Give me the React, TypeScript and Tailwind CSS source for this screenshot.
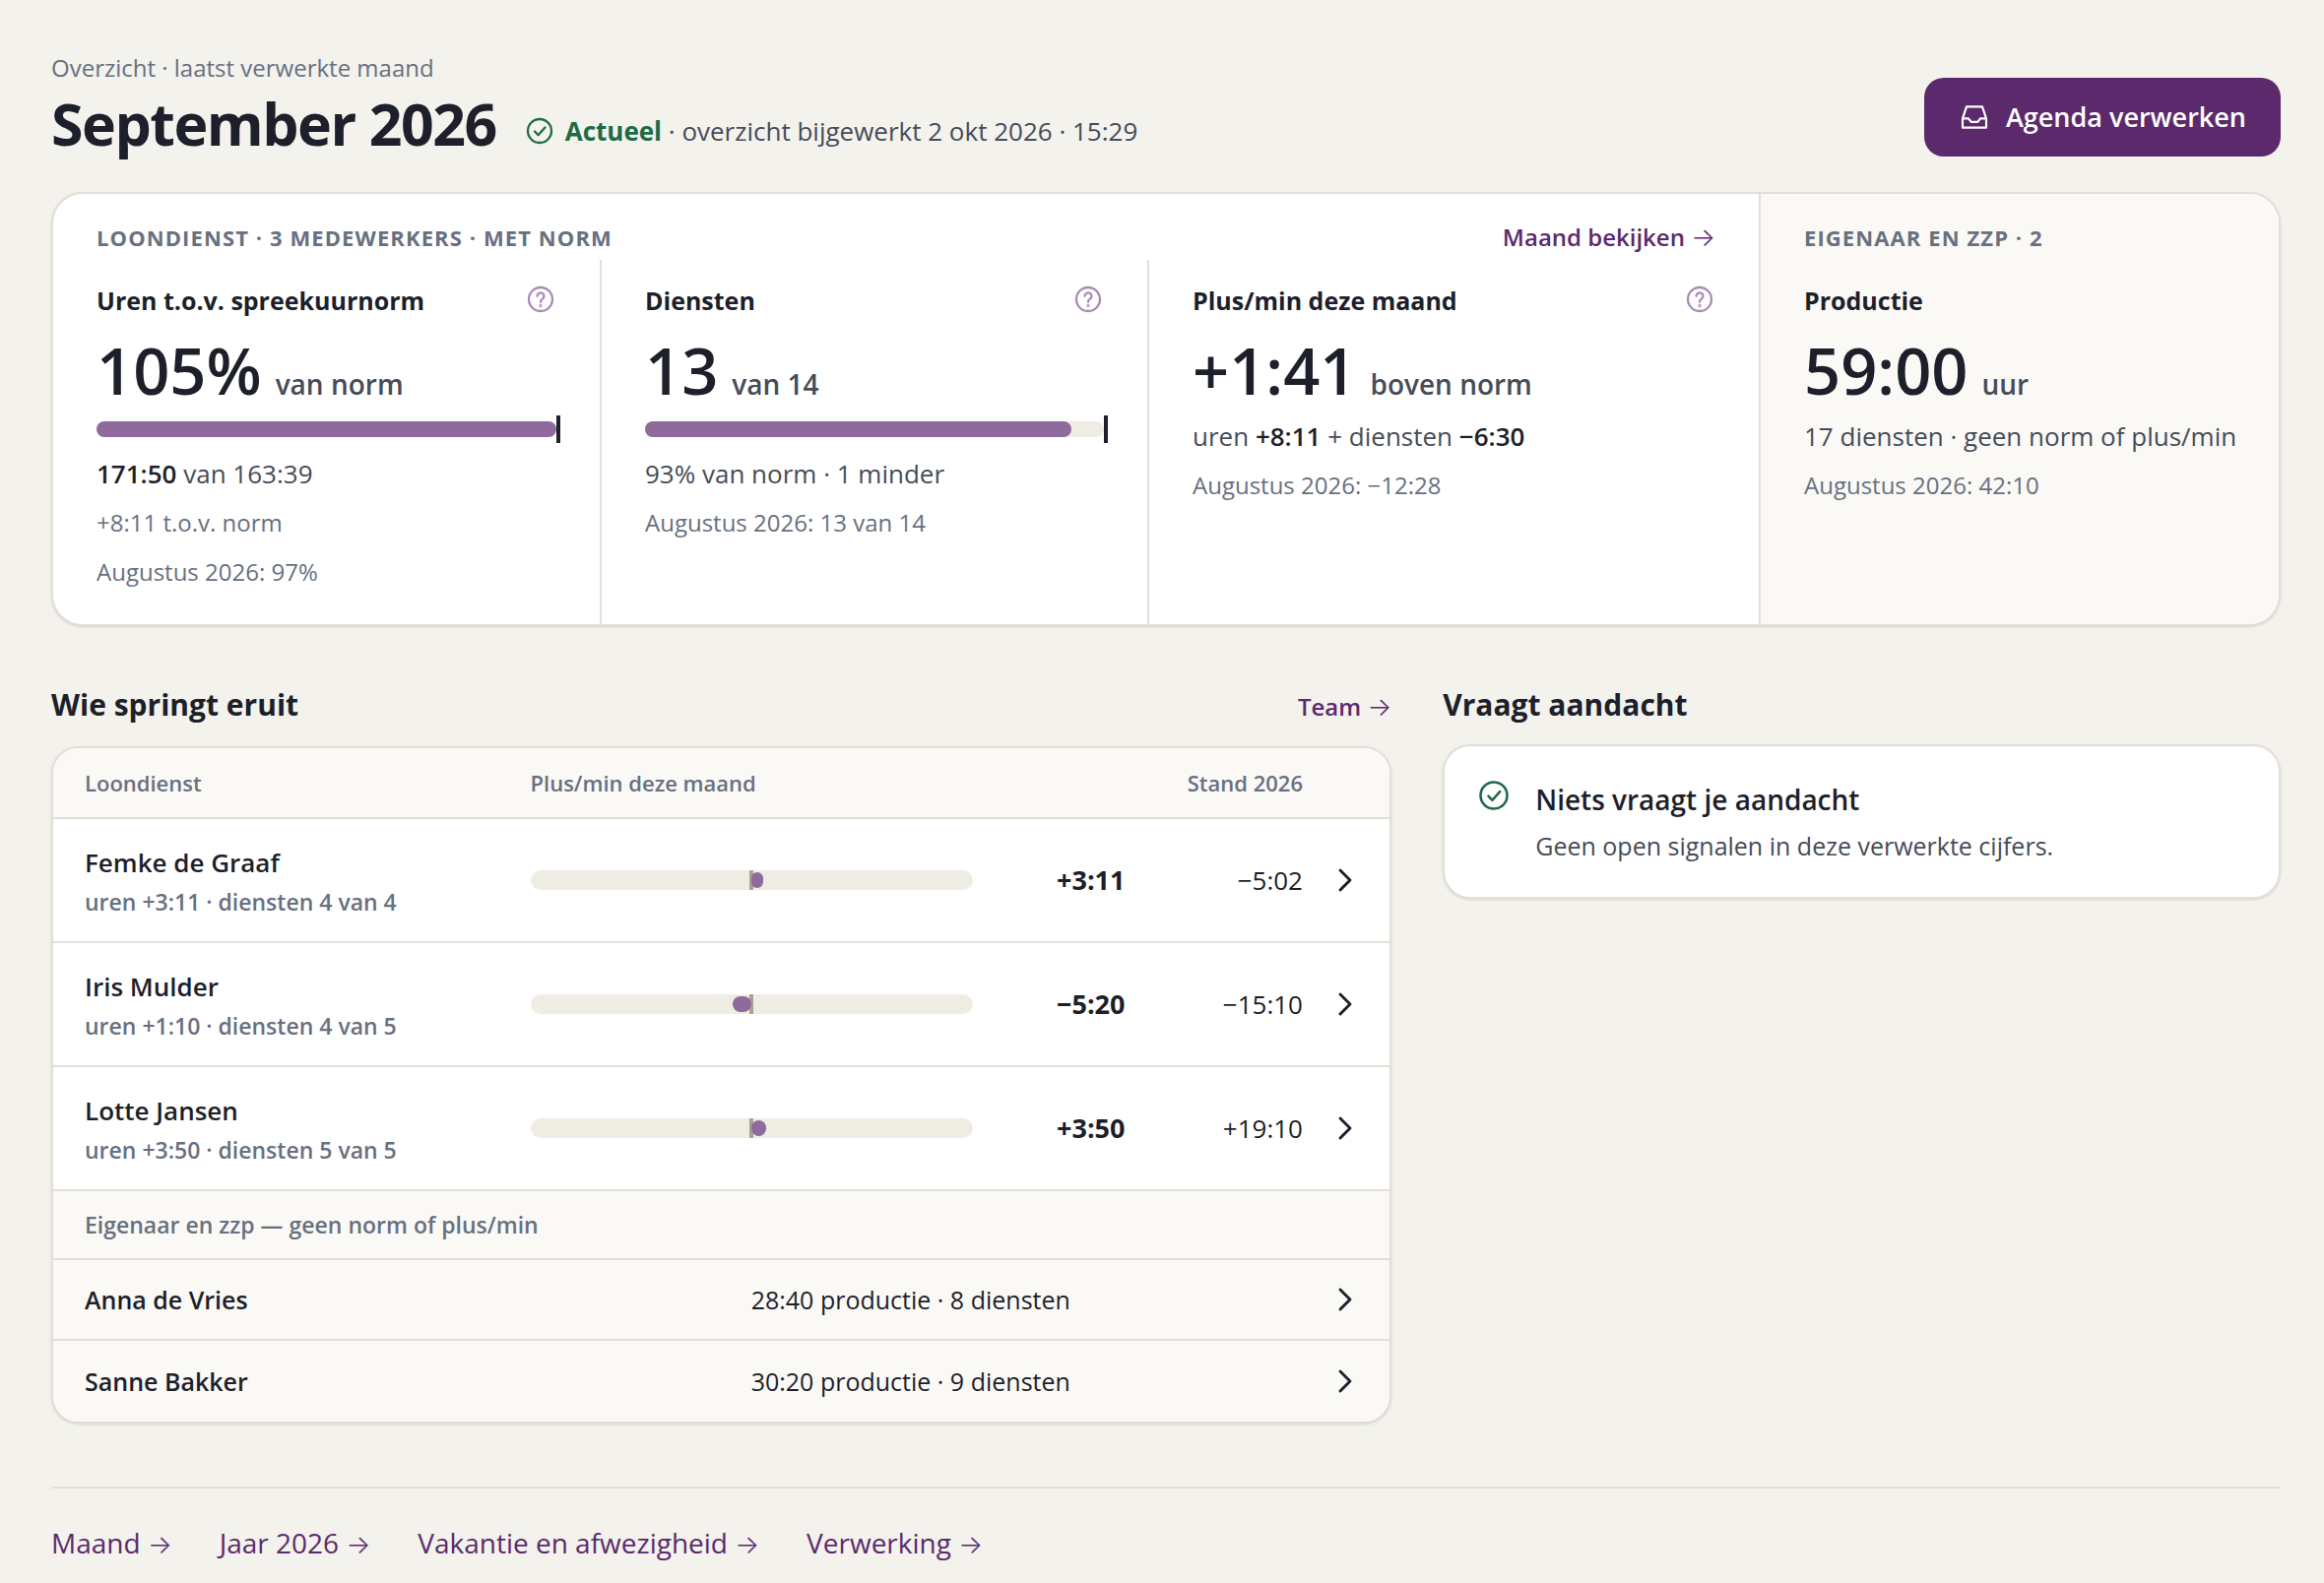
import { ReactNode } from "react"

const employees = [
  { name: "Femke de Graaf", detail: "uren +3:11 · diensten 4 van 4", diff: "+3:11", balance: "−5:02", left: 50, width: 2.7 },
  { name: "Iris Mulder", detail: "uren +1:10 · diensten 4 van 5", diff: "−5:20", balance: "−15:10", left: 45.7, width: 4.3 },
  { name: "Lotte Jansen", detail: "uren +3:50 · diensten 5 van 5", diff: "+3:50", balance: "+19:10", left: 50, width: 3.4 },
]

const owners = [
  { name: "Anna de Vries", production: "28:40 productie · 8 diensten" },
  { name: "Sanne Bakker", production: "30:20 productie · 9 diensten" },
]

const footerLinks = ["Maand", "Jaar 2026", "Vakantie en afwezigheid", "Verwerking"]

function CheckCircle({ className }: { className: string }) {
  return (
    <svg viewBox="0 0 24 24" fill="none" stroke="currentColor" strokeWidth="1.7" strokeLinecap="round" strokeLinejoin="round" className={className} aria-hidden="true">
      <circle cx="12" cy="12" r="9" />
      <path d="M8.3 12.4l2.6 2.8 5.2-5.8" />
    </svg>
  )
}

function HelpButton({ label }: { label: string }) {
  return (
    <button type="button" aria-label={`Uitleg bij ${label}`} className="size-8 shrink-0 text-[#a88bb3]">
      <svg viewBox="0 0 24 24" fill="none" stroke="currentColor" strokeWidth="1.7" strokeLinecap="round" strokeLinejoin="round" className="size-8">
        <circle cx="12" cy="12" r="9" />
        <path d="M9.4 9.6a2.6 2.5 0 1 1 4 2.1c-.9.6-1.4 1-1.4 2v.4" />
        <circle cx="12" cy="16.8" r="0.4" />
      </svg>
    </button>
  )
}

function Chevron() {
  return (
    <svg viewBox="0 0 24 24" fill="none" stroke="currentColor" strokeWidth="1.7" strokeLinecap="round" strokeLinejoin="round" className="size-10" aria-hidden="true">
      <path d="M9 18l6-6-6-6" />
    </svg>
  )
}

function Arrow() {
  return <span className="font-['Inter'] text-[26px] leading-8 font-light">→</span>
}

function Meter({ percent, label }: { percent: number; label: string }) {
  return (
    <div role="img" aria-label={label} className="relative mt-4 mb-[19px] h-4 rounded-full bg-[#efece4]">
      <div className="h-4 rounded-full bg-[#8f6a9c]" style={{ width: `${percent}%` }} />
      <div className="absolute -top-1.5 left-full h-7 w-1 bg-[#1d1f2a]" />
    </div>
  )
}

type MetricProps = { title: string; value: string; unit: string; help?: boolean; meter?: number; children: ReactNode }

function Metric({ title, value, unit, help, meter, children }: MetricProps) {
  return (
    <div className="px-11 pt-6 pb-[35px]">
      <div className="flex items-start justify-between">
        <h3 className="text-[25px] leading-[34px] font-bold">{title}</h3>
        {help && <HelpButton label={title} />}
      </div>
      <p className="mt-[18px] flex items-baseline gap-3.5 whitespace-nowrap">
        <span className="text-[65px] leading-[72px] font-semibold">{value}</span>
        <span className="text-[28px] leading-9 font-semibold text-[#464c58]">{unit}</span>
      </p>
      {meter !== undefined ? <Meter percent={meter} label={`${title}: ${meter}%`} /> : <div className="h-[13px]" />}
      <div className="flex flex-col gap-3.5 text-[24px] leading-9 whitespace-nowrap text-[#687080]">{children}</div>
    </div>
  )
}

function SummaryCard() {
  return (
    <section className="mt-9 grid grid-cols-[minmax(0,1734fr)_minmax(0,526fr)] overflow-hidden rounded-[32px] border-2 border-[#e3dfd6] bg-white shadow-sm">
      <div className="flex flex-col border-r-2 border-[#e3dfd6]">
        <div className="flex h-[67px] items-center justify-between px-11 pt-5">
          <h2 className="text-[22px] leading-8 font-bold tracking-wider text-[#687080]">LOONDIENST · 3 MEDEWERKERS · MET NORM</h2>
          <a href="#maand" className="text-[24px] leading-8 font-semibold text-[#5c2a6c]">
            Maand bekijken <Arrow />
          </a>
        </div>
        <div className="grid grow grid-cols-[557fr_556fr_619fr] divide-x-2 divide-[#e3dfd6]">
          <Metric title="Uren t.o.v. spreekuurnorm" value="105%" unit="van norm" help meter={100}>
            <p className="text-[26px] text-[#464c58]">
              <b className="font-semibold text-[#1d1f2a]">171:50</b> van 163:39
            </p>
            <p>+8:11 t.o.v. norm</p>
            <p>Augustus 2026: 97%</p>
          </Metric>
          <Metric title="Diensten" value="13" unit="van 14" help meter={93}>
            <p className="text-[26px] text-[#464c58]">93% van norm · 1 minder</p>
            <p>Augustus 2026: 13 van 14</p>
          </Metric>
          <Metric title="Plus/min deze maand" value="+1:41" unit="boven norm" help>
            <p className="text-[26px] text-[#464c58]">
              uren <b className="font-semibold text-[#1d1f2a]">+8:11</b> + diensten <b className="font-semibold text-[#1d1f2a]">−6:30</b>
            </p>
            <p>Augustus 2026: −12:28</p>
          </Metric>
        </div>
      </div>
      <div className="bg-[#faf9f6]">
        <div className="flex h-[67px] items-center px-11 pt-5">
          <h2 className="text-[22px] leading-8 font-bold tracking-wider text-[#687080]">EIGENAAR EN ZZP · 2</h2>
        </div>
        <Metric title="Productie" value="59:00" unit="uur">
          <p className="text-[26px] text-[#464c58]">17 diensten · geen norm of plus/min</p>
          <p>Augustus 2026: 42:10</p>
        </Metric>
      </div>
    </section>
  )
}

function TeamTable() {
  return (
    <div className="overflow-hidden rounded-[28px] border-2 border-[#e3dfd6] bg-white shadow-sm">
      <table className="w-full table-fixed border-separate border-spacing-0 text-[26px]">
        <colgroup>
          <col className="w-[35.7%]" />
          <col className="w-[33.1%]" />
          <col className="w-[11.4%]" />
          <col className="w-[13.3%]" />
          <col className="w-[6.5%]" />
        </colgroup>
        <thead className="bg-[#faf9f6] text-[22px] leading-8 text-[#687080]">
          <tr className="h-[72px]">
            <th scope="col" className="border-b-2 border-[#e3dfd6] pl-8 text-left font-semibold">Loondienst</th>
            <th scope="col" colSpan={2} className="border-b-2 border-[#e3dfd6] text-left font-semibold">Plus/min deze maand</th>
            <th scope="col" className="border-b-2 border-[#e3dfd6] text-right font-semibold">Stand 2026</th>
            <td className="border-b-2 border-[#e3dfd6]" />
          </tr>
        </thead>
        <tbody>
          {employees.map((e) => (
            <tr key={e.name} className="h-[126px]">
              <th scope="row" className="border-b-2 border-[#e3dfd6] pt-1 pl-8 text-left font-semibold">
                <span className="block leading-10">{e.name}</span>
                <span className="block text-[23px] leading-10 text-[#687080]">{e.detail}</span>
              </th>
              <td className="border-b-2 border-[#e3dfd6]">
                <div className="relative h-5 rounded-full bg-[#efece4]">
                  <div className="absolute top-0 left-1/2 -ml-0.5 h-5 w-1 bg-[#a8a294]" />
                  <div className="absolute top-0.5 h-4 rounded-full bg-[#8f6a9c]" style={{ left: `${e.left}%`, width: `${e.width}%` }} />
                </div>
              </td>
              <td className="border-b-2 border-[#e3dfd6] text-right text-[27px] font-bold">{e.diff}</td>
              <td className="border-b-2 border-[#e3dfd6] text-right">{e.balance}</td>
              <td className="border-b-2 border-[#e3dfd6]">
                <a href="#team" aria-label={e.name} className="flex justify-end pr-[25px]">
                  <Chevron />
                </a>
              </td>
            </tr>
          ))}
        </tbody>
        <tbody className="bg-[#faf9f6]">
          <tr className="h-[70px]">
            <th scope="colgroup" colSpan={5} className="border-b-2 border-[#e3dfd6] pl-8 text-left text-[23px] leading-8 font-semibold text-[#687080]">
              Eigenaar en zzp — geen norm of plus/min
            </th>
          </tr>
          {owners.map((o) => (
            <tr key={o.name} className="group h-[82px]">
              <th scope="row" className="border-b-2 border-[#e3dfd6] pt-0.5 pl-8 text-left text-[25px] font-semibold group-last:border-b-0">{o.name}</th>
              <td colSpan={3} className="border-b-2 border-[#e3dfd6] pt-0.5 pr-3 text-center text-[25px] group-last:border-b-0">{o.production}</td>
              <td className="border-b-2 border-[#e3dfd6] group-last:border-b-0">
                <a href="#team" aria-label={o.name} className="flex justify-end pr-[25px]">
                  <Chevron />
                </a>
              </td>
            </tr>
          ))}
        </tbody>
      </table>
    </div>
  )
}

export default function App() {
  return (
    <div className="min-h-screen bg-[#f3f2ed] pt-[49px] pr-11 pb-6 pl-[52px] font-['Open_Sans',sans-serif] text-[#1d1f2a]">
      <header className="flex items-end justify-between">
        <div>
          <p className="text-[24px] leading-10 text-[#687080]">Overzicht · laatst verwerkte maand</p>
          <div className="mt-0.5 flex items-end gap-7">
            <h1 className="text-[59px] leading-[68px] font-bold tracking-tight">September 2026</h1>
            <p className="flex items-center gap-2.5 pb-2 text-[26px] leading-9 text-[#464c58]">
              <CheckCircle className="size-8 text-[#1d6b45]" />
              <span>
                <b className="font-bold text-[#1d6b45]">Actueel</b> · overzicht bijgewerkt 2 okt 2026 · 15:29
              </span>
            </p>
          </div>
        </div>
        <button type="button" className="flex h-20 items-center gap-4 rounded-[20px] bg-[#5c2a6c] px-[35px] text-[27px] font-semibold text-white">
          <svg viewBox="0 0 24 24" fill="none" stroke="currentColor" strokeWidth="1.6" strokeLinejoin="round" className="size-8" aria-hidden="true">
            <path d="M3 13L6 4h12l3 9v7H3z" />
            <path d="M3 13h4.5l2 2.7h5l2-2.7H21" />
          </svg>
          Agenda verwerken
        </button>
      </header>

      <SummaryCard />

      <div className="mt-[60px] grid grid-cols-[8fr_5fr] items-start gap-[52px]">
        <section>
          <div className="mb-[22px] flex items-baseline justify-between">
            <h2 className="text-[30px] leading-10 font-bold">Wie springt eruit</h2>
            <a href="#team" className="text-[24px] leading-9 font-semibold text-[#5c2a6c]">
              Team <Arrow />
            </a>
          </div>
          <TeamTable />
        </section>
        <section>
          <h2 className="mb-5 text-[30px] leading-10 font-bold">Vraagt aandacht</h2>
          <div className="flex items-start gap-6 rounded-[28px] border-2 border-[#e3dfd6] bg-white p-8 shadow-sm">
            <CheckCircle className="size-9 shrink-0 text-[#1d6b45]" />
            <div className="flex flex-col gap-[5px]">
              <h3 className="text-[28px] leading-[44px] font-semibold">Niets vraagt je aandacht</h3>
              <p className="text-[25px] leading-10 text-[#464c58]">Geen open signalen in deze verwerkte cijfers.</p>
            </div>
          </div>
        </section>
      </div>

      <nav className="mt-16 flex gap-12 border-t-2 border-[#e3dfd6] pt-[35px] text-[28px] leading-10 text-[#5c2a6c]">
        {footerLinks.map((label) => (
          <a key={label} href="#overzicht">
            {label} <Arrow />
          </a>
        ))}
      </nav>
    </div>
  )
}
